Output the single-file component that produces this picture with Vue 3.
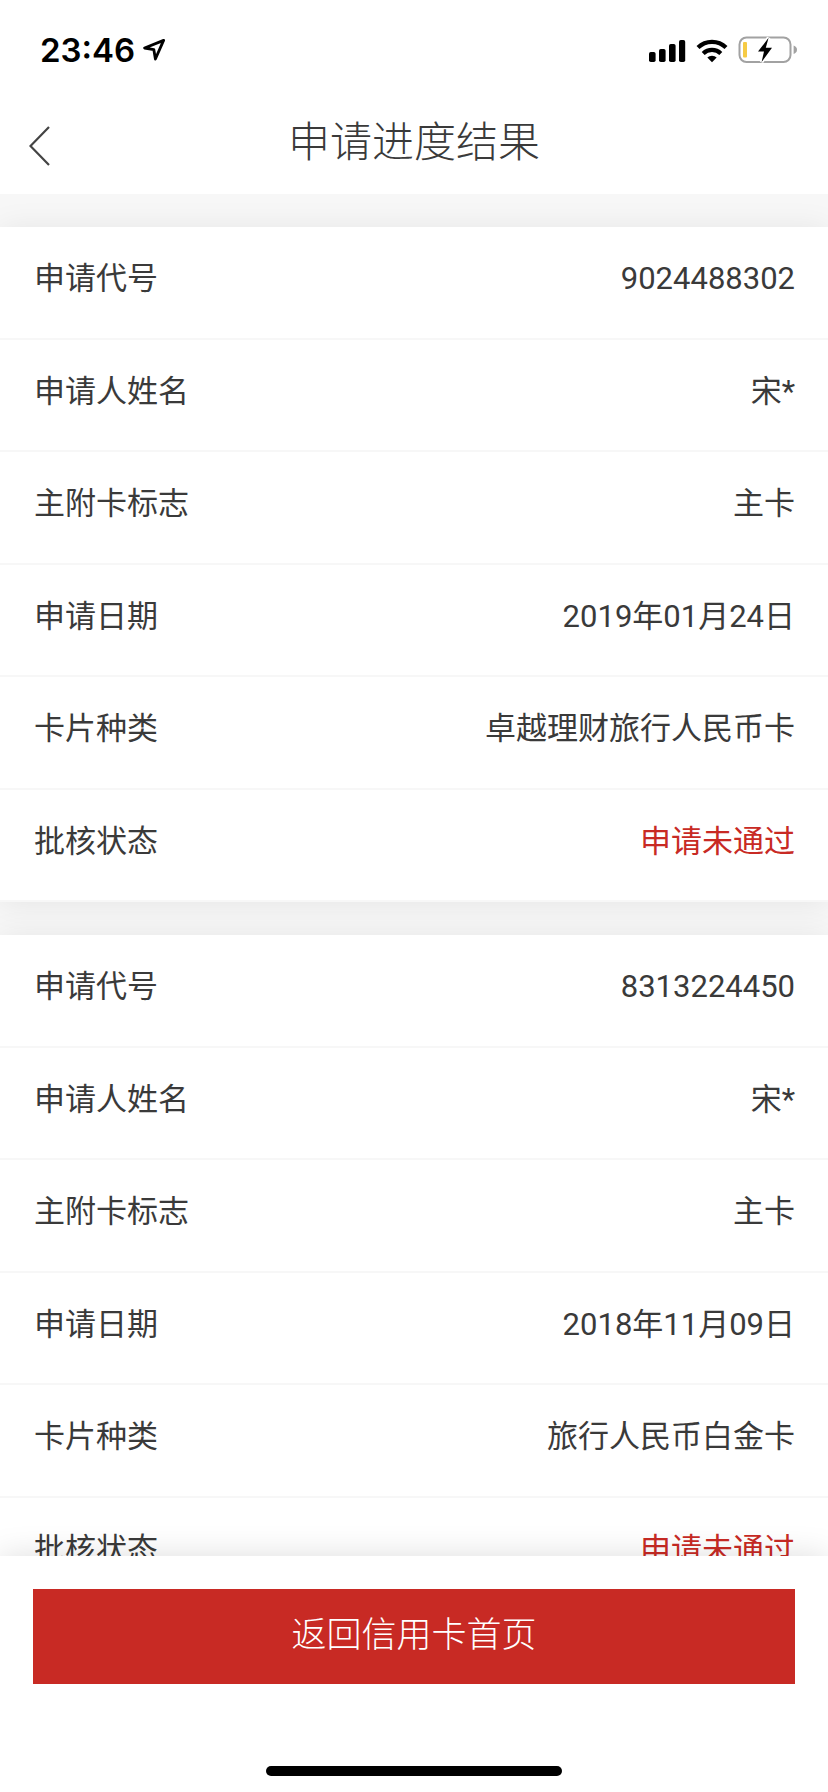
<script setup>
import { ref } from 'vue'

const applications = ref([
  {
    id: '9024488302',
    name: '宋*',
    holder: '主卡',
    date: '2019年01月24日',
    card: '卓越理财旅行人民币卡',
    status: '申请未通过',
    rejected: true
  },
  {
    id: '8313224450',
    name: '宋*',
    holder: '主卡',
    date: '2018年11月09日',
    card: '旅行人民币白金卡',
    status: '申请未通过',
    rejected: true
  }
])

const fields = [
  { key: 'id', label: '申请代号' },
  { key: 'name', label: '申请人姓名' },
  { key: 'holder', label: '主附卡标志' },
  { key: 'date', label: '申请日期' },
  { key: 'card', label: '卡片种类' },
  { key: 'status', label: '批核状态' }
]

const goBack = () => {
  window.history.back()
}
</script>

<template>
  <div class="page">
    <div class="status-bar">
      <div class="clock">
        <span>23:46</span>
        <svg width="24" height="24" viewBox="0 0 24 24">
          <path d="M20.6 2.4 L1.6 10 L10.8 11.6 L12.4 21 Z" fill="none" stroke="#000" stroke-width="2.8" stroke-linejoin="round" />
        </svg>
      </div>
      <svg width="150" height="30" viewBox="0 0 150 30">
        <!-- signal -->
        <rect x="1" y="17" width="6.6" height="10" rx="1.8" />
        <rect x="11" y="14" width="6.6" height="13" rx="1.8" />
        <rect x="21" y="9" width="6.6" height="18" rx="1.8" />
        <rect x="31" y="5" width="6.2" height="22" rx="1.8" />
        <!-- wifi -->
        <g fill="none" stroke="#000" stroke-width="4.2">
          <path d="M50 12.6 A20 20 0 0 1 78 12.6" />
          <path d="M55.2 18.4 A12.6 12.6 0 0 1 72.8 18.4" />
        </g>
        <path d="M59.3 22.6 A6.8 6.8 0 0 1 68.7 22.6 L64 27.2 Z" />
        <!-- battery -->
        <rect x="91.5" y="2.4" width="51" height="24.6" rx="7" fill="none" stroke="#a2a2a2" stroke-width="2" />
        <path d="M145.6 10.4 Q149 11.6 149 14.7 Q149 17.8 145.6 19 Z" fill="#a2a2a2" />
        <rect x="95" y="7" width="4" height="15.4" rx="1" fill="#f6cb45" />
        <path d="M120.6 2.8 L110 16.6 L116 16.6 L113.6 27 L124 12.8 L117.8 12.8 Z" fill="#000" stroke="#fff" stroke-width="3.6" paint-order="stroke" />
      </svg>
    </div>

    <header class="nav-bar">
      <button class="back-btn" type="button" aria-label="返回" @click="goBack">
        <svg width="22" height="40" viewBox="0 0 22 40">
          <path d="M20 1 L1.5 20 L20 39" fill="none" stroke="#444" stroke-width="2.2" />
        </svg>
      </button>
      <h1>申请进度结果</h1>
    </header>

    <main class="results">
      <dl v-for="item in applications" :key="item.id" class="card">
        <div v-for="field in fields" :key="field.key" class="row">
          <dt>{{ field.label }}</dt>
          <dd :class="{ rejected: field.key === 'status' && item.rejected }">{{ item[field.key] }}</dd>
        </div>
      </dl>
    </main>

    <footer class="bottom-bar">
      <button class="home-btn" type="button">返回信用卡首页</button>
      <div class="home-indicator"></div>
    </footer>
  </div>
</template>

<style>
body { margin: 0; }
</style>

<style scoped>
.page {
  display: flex;
  flex-direction: column;
  height: 100vh;
  background: #f7f7f7;
  color: #3a3a3a;
  font-family: Roboto, "Noto Sans CJK SC", sans-serif;
}

.status-bar {
  display: flex;
  justify-content: space-between;
  align-items: center;
  box-sizing: border-box;
  height: 88px;
  padding: 12px 30px 0 40px;
  background: #fff;
}
.clock { display: flex; align-items: center; gap: 8px; color: #000; font: 600 33px/40px Inter, sans-serif; }

.nav-bar {
  position: relative;
  display: flex;
  justify-content: center;
  align-items: center;
  box-sizing: border-box;
  height: 106px;
  padding-top: 4px;
  background: #fff;
}
h1 { margin: 0; font-size: 42px; line-height: 60px; font-weight: 300; }
.back-btn {
  position: absolute;
  left: 0;
  top: 10px;
  bottom: 0;
  display: flex;
  align-items: center;
  padding: 0 29px;
  border: none;
  background: none;
  cursor: pointer;
}

.results {
  flex: 1;
  min-height: 0;
  overflow-y: auto;
  scrollbar-width: none;
  padding-top: 33px;
}
.card {
  display: grid;
  grid-auto-rows: 1fr;
  min-height: 675px;
  margin: 0 0 33px;
  background: #fff;
  box-shadow: 0 2px 30px rgba(0, 0, 0, 0.08);
}
.row {
  display: flex;
  justify-content: space-between;
  align-items: center;
  padding: 0 33px 6px 34px;
  border-bottom: 2px solid #f7f7f7;
  font-size: 31px;
  line-height: 44px;
}
dd { margin: 0; text-align: right; }
.rejected { color: #c82a24; }

.bottom-bar {
  position: relative;
  display: flex;
  flex-direction: column;
  align-items: center;
  padding: 33px 33px 16px;
  background: #fff;
  box-shadow: 0 2px 32px rgba(0, 0, 0, 0.15);
}
.home-btn {
  width: 100%;
  height: 95px;
  padding: 0 0 10px;
  border: none;
  background: #c82a24;
  color: #fff;
  font-family: inherit;
  font-size: 35px;
  font-weight: 300;
  cursor: pointer;
}
.home-indicator { width: 296px; height: 10px; margin-top: 82px; border-radius: 5px; background: #000; }
</style>
